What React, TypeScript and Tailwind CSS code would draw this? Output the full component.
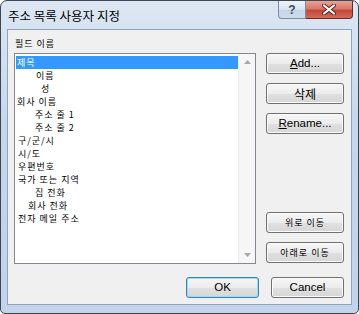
import React from 'react';

const items: { label: string; indent: number }[] = [
  { label: '제목', indent: 1 },
  { label: '이름', indent: 20 },
  { label: '성', indent: 25 },
  { label: '회사 이름', indent: 1 },
  { label: '주소 줄 1', indent: 19 },
  { label: '주소 줄 2', indent: 19 },
  { label: '구/군/시', indent: 2 },
  { label: '시/도', indent: 2 },
  { label: '우편번호', indent: 2 },
  { label: '국가 또는 지역', indent: 2 },
  { label: '집 전화', indent: 19 },
  { label: '회사 전화', indent: 12 },
  { label: '전자 메일 주소', indent: 2 },
];

const btn =
  'flex items-center justify-center w-[78px] h-[21px] rounded-[3px] border border-[#707070] bg-[linear-gradient(#f6f6f6_0%,#ececec_50%,#e0e0e0_51%,#d6d6d6_100%)] shadow-[inset_0_0_0_1px_#fbfbfb] text-black';

const App: React.FC = () => {
  return (
    <div className="w-[359px] h-[314px] bg-white font-['Liberation_Sans','Noto_Sans_CJK_KR',sans-serif]">
      <div className="w-[359px] h-[314px] flex flex-col rounded-t-[7px] rounded-b-[5px] border border-[#3b4756] bg-[linear-gradient(#dde7f3_0%,#c6d6eb_40%,#c2d3ea_100%)] px-[6px] pb-[8px]">
        {/* Title bar */}
        <div className="h-[28px] flex items-start justify-between">
          <div className="pt-[7px] pl-[1px] text-[12.5px] leading-[16px] text-black font-['Noto_Sans_CJK_KR',sans-serif]">
            주소 목록 사용자 지정
          </div>
          <div className="flex mr-[-1px]">
            <div className="w-[28px] h-[18px] rounded-bl-[4px] border border-t-0 border-[#7b8ca3] bg-[linear-gradient(#eef3f9_0%,#d9e3f0_50%,#c6d4e6_51%,#cfdcec_100%)] flex items-center justify-center text-[12px] leading-none text-[#3e4a5b] font-bold">
              ?
            </div>
            <div className="w-[47px] h-[18px] rounded-br-[4px] border border-t-0 border-l-0 border-[#6e2a2a] bg-[linear-gradient(#e8a496_0%,#d8786a_45%,#c4473a_55%,#d06a58_100%)] flex items-center justify-center">
              <svg width="14" height="11" viewBox="0 0 14 11">
                <path d="M2 1.5 L12 9.5 M12 1.5 L2 9.5" stroke="#5a2020" strokeWidth="4" strokeLinecap="round" />
                <path d="M2 1.5 L12 9.5 M12 1.5 L2 9.5" stroke="#ffffff" strokeWidth="2.2" strokeLinecap="round" />
              </svg>
            </div>
          </div>
        </div>

        {/* Client area */}
        <div className="flex-1 flex flex-col border border-[#8fa3bd] bg-[#f0f0f0] pl-[6px] pr-[7px]">
          <div className="h-[23px] pt-[8px] pl-[1px] text-[9px] tracking-[1px] leading-[12px] text-black font-['Noto_Sans_CJK_KR',sans-serif]">
            필드 이름
          </div>
          <div className="flex gap-[10px]">
            {/* Listbox */}
            <div className="w-[242px] h-[211px] border border-[#828790] bg-white flex">
              <div className="flex-1 pt-[2px] pl-px font-['Noto_Sans_CJK_KR',sans-serif] text-[9px] tracking-[1px]">
                {items.map((it, i) => (
                  <div
                    key={it.label}
                    className={
                      i === 0
                        ? 'h-[13px] leading-[13px] bg-[#3399ff] text-white whitespace-pre'
                        : 'h-[13px] leading-[13px] text-black whitespace-pre'
                    }
                    style={{ paddingLeft: it.indent }}
                  >
                    {it.label}
                  </div>
                ))}
              </div>
              <div className="w-[17px] bg-[#f6f6f6] border-l border-[#ececec] flex flex-col justify-between items-center py-[6px]">
                <svg width="7" height="4" viewBox="0 0 7 4">
                  <path d="M0 4 L3.5 0 L7 4 Z" fill="#a8a8a8" />
                </svg>
                <svg width="7" height="4" viewBox="0 0 7 4">
                  <path d="M0 0 L3.5 4 L7 0 Z" fill="#a8a8a8" />
                </svg>
              </div>
            </div>

            {/* Right buttons */}
            <div className="flex flex-col h-[211px]">
              <div className="flex flex-col gap-[9px]">
                <button className={btn + ' text-[11.5px]'}>
                  <span><span className="underline">A</span>dd...</span>
                </button>
                <button className={btn + " text-[12px] font-['Noto_Sans_CJK_KR',sans-serif]"}>삭제</button>
                <button className={btn + ' text-[11.5px]'}>
                  <span><span className="underline">R</span>ename...</span>
                </button>
              </div>
              <div className="mt-auto flex flex-col gap-[9px] pb-px">
                <button className={btn + " text-[9px] tracking-[1px] text-[#333] font-['Noto_Sans_CJK_KR',sans-serif]"}>위로 이동</button>
                <button className={btn + " text-[9px] tracking-[1px] text-[#333] font-['Noto_Sans_CJK_KR',sans-serif]"}>아래로 이동</button>
              </div>
            </div>
          </div>

          {/* OK / Cancel */}
          <div className="flex justify-end gap-[12px] mt-[13px]">
            <button className="flex items-center justify-center w-[73px] h-[21px] rounded-[3px] border border-[#3c7fb1] bg-[linear-gradient(#f6f6f6_0%,#ececec_50%,#e0e0e0_51%,#d6d6d6_100%)] shadow-[inset_0_0_0_1px_#9fd9f5] text-[11.5px] text-black">
              OK
            </button>
            <button className="flex items-center justify-center w-[73px] h-[21px] rounded-[3px] border border-[#707070] bg-[linear-gradient(#f6f6f6_0%,#ececec_50%,#e0e0e0_51%,#d6d6d6_100%)] shadow-[inset_0_0_0_1px_#fbfbfb] text-[11.5px] text-black">
              Cancel
            </button>
          </div>
        </div>
      </div>
    </div>
  );
};

export default App;
